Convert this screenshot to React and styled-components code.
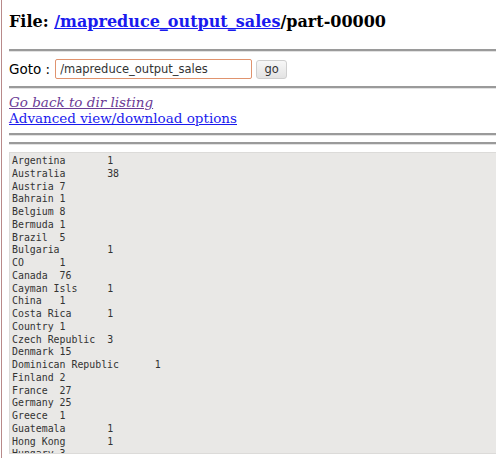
import React from "react"
import styled, {createGlobalStyle} from "styled-components"

const GlobalStyle = createGlobalStyle`
  html, body {
    margin: 0;
    padding: 0;
    background: #fff;
    overflow: hidden;
  }
`

const rows = [
  "Argentina\t1",
  "Australia\t38",
  "Austria 7",
  "Bahrain 1",
  "Belgium 8",
  "Bermuda 1",
  "Brazil\t5",
  "Bulgaria\t1",
  "CO\t1",
  "Canada\t76",
  "Cayman Isls\t1",
  "China\t1",
  "Costa Rica\t1",
  "Country 1",
  "Czech Republic\t3",
  "Denmark 15",
  "Dominican Republic\t1",
  "Finland 2",
  "France\t27",
  "Germany 25",
  "Greece\t1",
  "Guatemala\t1",
  "Hong Kong\t1",
  "Hungary 3",
]

const App = () => {
  return (
    <>
      <GlobalStyle/>
      <Page>
        <Title>
          File: <TitleLink href="#">/mapreduce_output_sales</TitleLink>/part-00000
        </Title>
        <Rule $gap={17}/>
        <GotoForm onSubmit={e => e.preventDefault()}>
          <GotoLabel>Goto :</GotoLabel>
          <PathInput defaultValue="/mapreduce_output_sales"/>
          <GoButton type="submit">go</GoButton>
        </GotoForm>
        <Rule $gap={7}/>
        <Links>
          <BackLink href="#">Go back to dir listing</BackLink>
          <NavLink href="#">Advanced view/download options</NavLink>
        </Links>
        <Rule $gap={7}/>
        <Rule $gap={6}/>
        <Output>{rows.join("\n")}</Output>
      </Page>
    </>
  )
}

const Page = styled.div`
  height: 458px;
  box-sizing: border-box;
  border-left: 1px solid #b88a8a;
  margin-left: 1px;
  padding: 12px 0 0 7px;
  font-family: "DejaVu Serif", serif;
  color: #000;
  overflow: hidden;
`

const Title = styled.h3`
  margin: 0;
  font-size: 16px;
  font-weight: bold;
  line-height: 20px;
  white-space: nowrap;
`

const TitleLink = styled.a`
  color: #1a1aee;
  text-decoration: underline;
`

const Rule = styled.hr`
  margin: ${p => p.$gap}px 0 0;
  border: none;
  border-top: 2px solid #9a9a9a;
  border-bottom: 1px solid #e2e2e2;
  height: 0;
`

const GotoForm = styled.form`
  display: flex;
  align-items: center;
  margin: 7px 0 0;
  height: 20px;
`

const GotoLabel = styled.span`
  font-family: "DejaVu Sans", sans-serif;
  font-size: 13.5px;
  margin-right: 5px;
`

const PathInput = styled.input`
  width: 197px;
  height: 20px;
  box-sizing: border-box;
  border: 1px solid #e0936e;
  border-radius: 2px;
  padding: 0 4px;
  font-family: "DejaVu Sans", sans-serif;
  font-size: 11.5px;
  color: #333;
  outline: none;
`

const GoButton = styled.button`
  margin-left: 4px;
  width: 31px;
  height: 19px;
  box-sizing: border-box;
  border: 1px solid #cfcfcf;
  border-radius: 3px;
  background: linear-gradient(#f7f7f7, #e3e3e3);
  font-family: "DejaVu Sans", sans-serif;
  font-size: 11.5px;
  color: #333;
  padding: 0;
`

const Links = styled.div`
  display: flex;
  flex-direction: column;
  align-items: flex-start;
  margin-top: 5px;
  font-size: 13.5px;
  line-height: 16px;
`

const BackLink = styled.a`
  color: #6b3b96;
  font-style: italic;
`

const NavLink = styled.a`
  color: #1a1aee;
`

const Output = styled.pre`
  margin: 7px 0 0;
  padding: 2px 2px;
  height: 302px;
  box-sizing: border-box;
  overflow: hidden;
  background: #e9e8e6;
  border: 1px solid #dcdbd9;
  border-right: none;
  font-family: "DejaVu Sans Mono", monospace;
  font-size: 9.9px;
  line-height: 12.75px;
  color: #333;
  tab-size: 8;
`

export default App
